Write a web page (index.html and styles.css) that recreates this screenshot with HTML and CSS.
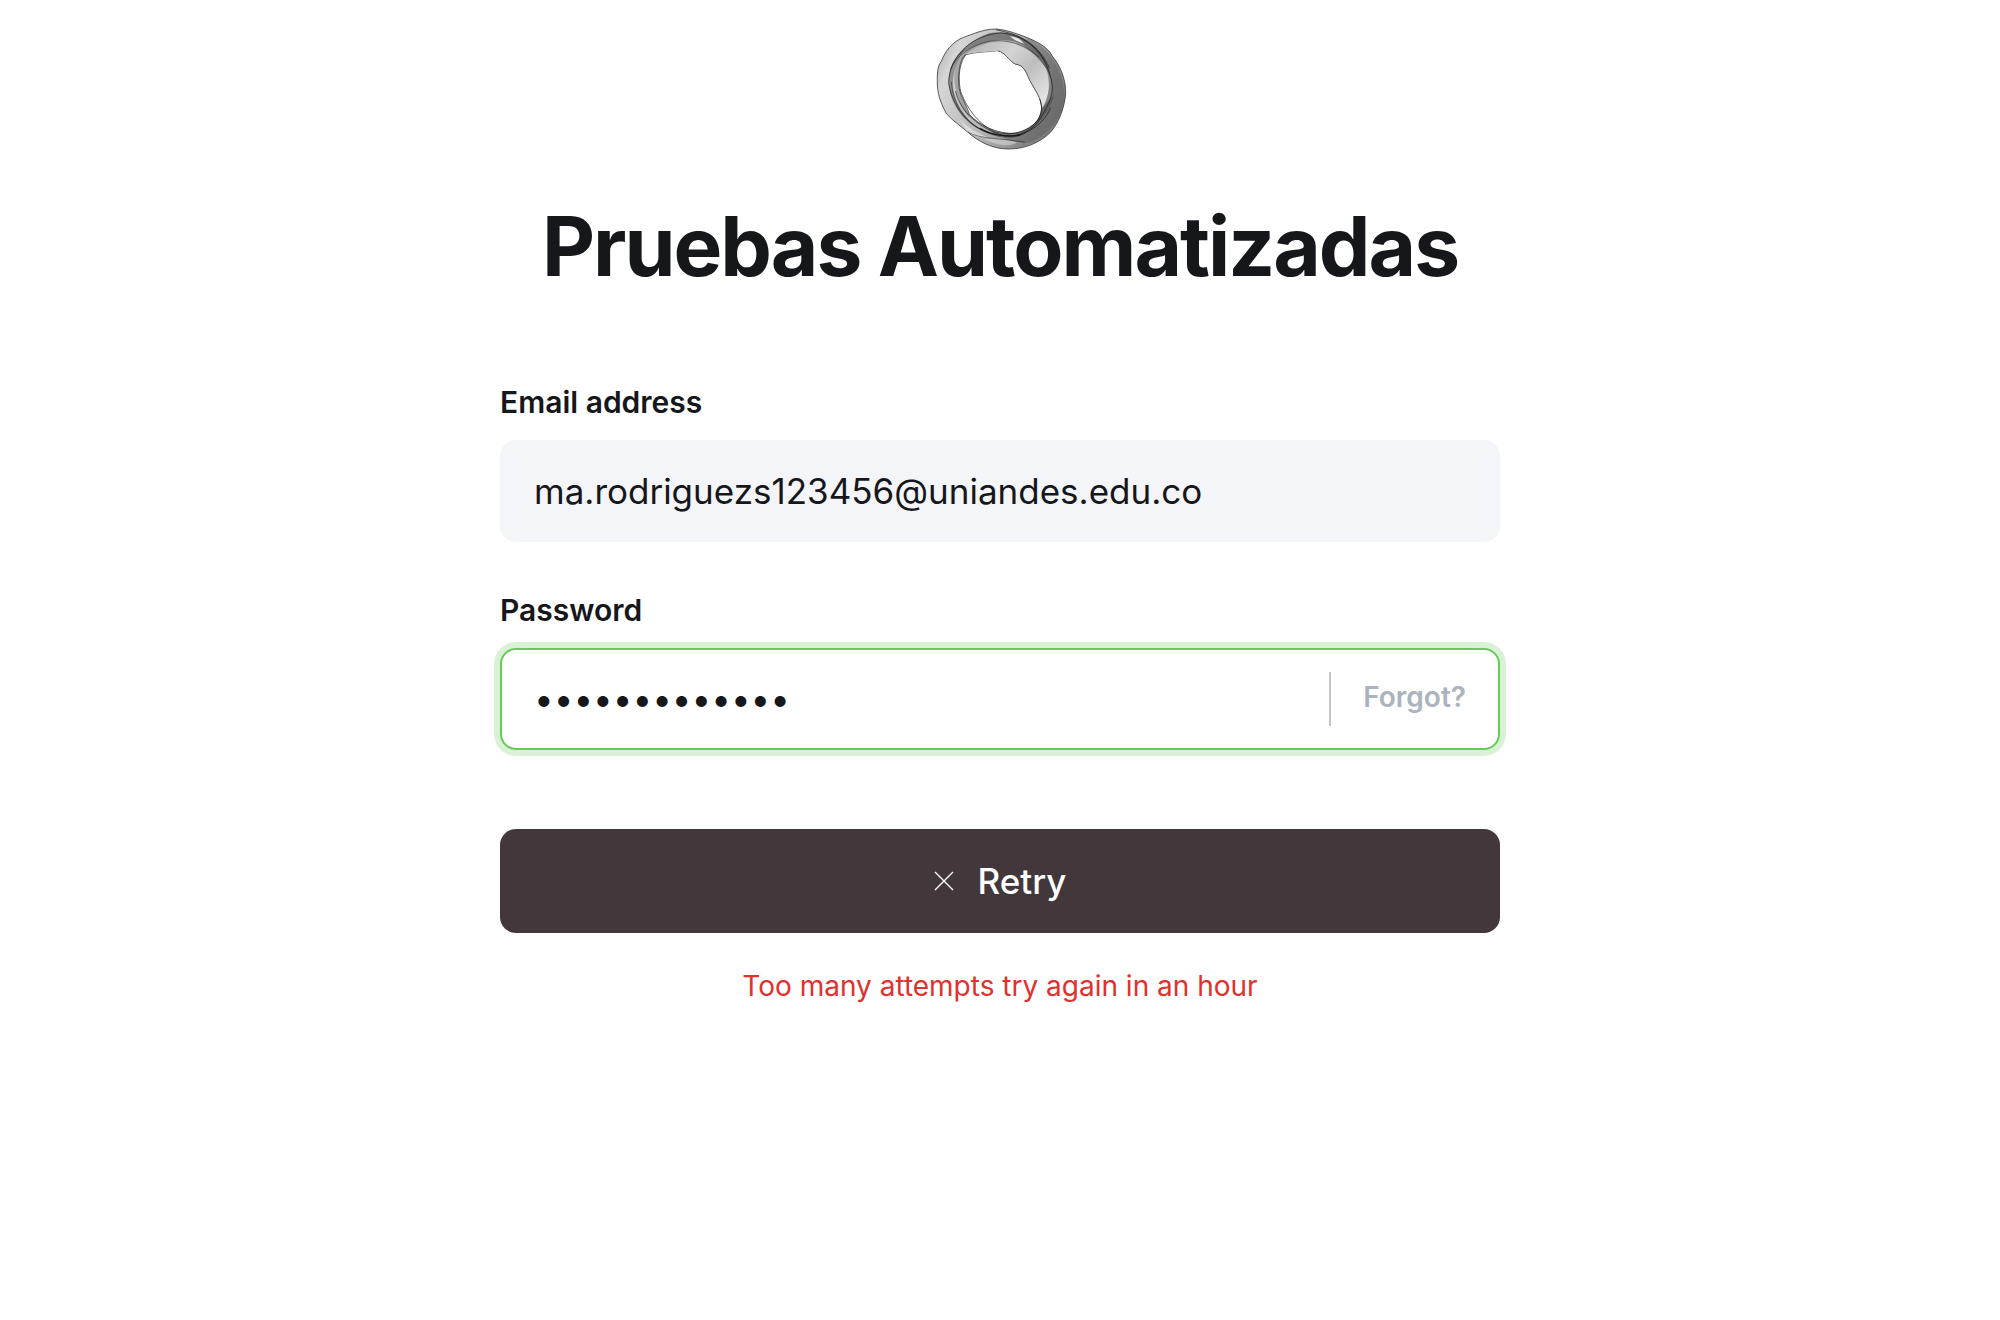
FILE: index.html
```html
<!DOCTYPE html>
<html lang="en">
<head>
<meta charset="utf-8">
<meta name="viewport" content="width=device-width, initial-scale=1">
<title>Sign in - Pruebas Automatizadas</title>
<link rel="stylesheet" href="styles.css">
</head>
<body>
<main class="signin">
  <header class="signin-header">
    <svg class="site-icon" viewBox="0 0 480 450" aria-hidden="true">
      <defs>
        <linearGradient id="band" x1="0" y1="0.2" x2="1" y2="0.6">
          <stop offset="0" stop-color="#b4b4b4"/>
          <stop offset="0.12" stop-color="#d6d6d6"/>
          <stop offset="0.5" stop-color="#b8b8b8"/>
          <stop offset="0.85" stop-color="#858585"/>
          <stop offset="1" stop-color="#7a7a7a"/>
        </linearGradient>
        <linearGradient id="veil" x1="0" y1="0" x2="1" y2="0.8">
          <stop offset="0" stop-color="#b0b0b0"/>
          <stop offset="0.4" stop-color="#d4d4d4"/>
          <stop offset="0.65" stop-color="#bdbdbd"/>
          <stop offset="1" stop-color="#e4e4e4"/>
        </linearGradient>
      </defs>
      <path fill="url(#band)" fill-rule="evenodd" stroke="#3c3c3c" stroke-width="2.5" d="M228 42C190 42 160 57 128 68C96 82 75 109 64 139C50 155 52 184 52 210C54 246 67 274 80 297C98 317 120 332 142 350C172 378 216 402 264 402C314 402 348 386 378 364C411 339 433 284 437 236C438 190 419 150 397 124C384 95 349 79 312 64C284 54 257 44 228 42Z M233 107C259 113 264 137 286 147C310 150 318 169 328 193C343 223 365 247 365 281C362 316 332 347 286 355C236 358 180 334 148 298C135 257 115 239 116 200C114 158 124 127 137 119C169 110 205 111 233 107Z"/>
      <path fill="url(#veil)" d="M137 119C158 92 207 77 260 82C316 89 354 125 378 160C392 198 390 243 365 281C365 247 343 223 328 193C318 169 310 150 286 147C264 137 259 113 233 107C205 111 169 110 137 119Z"/>
      <path fill="#333" fill-opacity="0.5" d="M91 163C103 121 150 74 210 54C261 47 300 60 330 82C360 104 385 140 392 190C378 150 350 120 312 92C276 71 225 70 174 88C127 107 103 133 91 163Z"/>
      <path fill="#333" fill-opacity="0.4" d="M86 204C84 155 105 124 139 98C108 134 95 178 100 224C114 292 160 341 224 357C164 350 119 303 101 263C91 243 87 224 86 204Z"/>
      <path fill="#444" fill-opacity="0.3" d="M116 200C112 160 120 132 137 119C160 96 200 82 240 78C190 72 140 92 116 130C100 160 98 200 112 240C120 270 130 290 150 308C135 257 115 239 116 200Z"/>
      <path fill="#222" fill-opacity="0.3" d="M210 350C236 358 260 358 286 355C332 347 362 316 365 281C382 263 394 248 403 238C390 290 354 338 301 360C270 368 237 364 210 350Z"/>
      <path fill="#444" fill-opacity="0.28" d="M312 64C384 95 425 150 434 240C428 306 390 357 328 383C300 384 270 378 250 370C300 368 350 335 380 280C408 238 405 157 312 64Z"/>
      <path fill="#e6e6e6" d="M270 63C291 66 303 73 312 86C297 82 282 75 270 63Z"/>
      <path fill="#e0e0e0" fill-opacity="0.75" d="M118 312C142 338 178 357 208 369C180 369 158 363 140 348Z"/>
      <path fill="#dcdcdc" fill-opacity="0.55" d="M190 372C225 368 255 372 290 382C280 394 240 396 190 372Z"/>
      <g fill="none" stroke="#151515" stroke-width="2.5" stroke-opacity="0.8">
        <path d="M86 204C89 116 163 58 244 54C306 60 357 98 380 152C404 209 403 238 373 288C350 343 299 372 238 361C166 350 101 296 86 204Z"/>
        <path d="M137 119C112 155 116 202 122 230C143 285 177 327 221 349C269 367 326 350 356 313C368 289 366 270 359 252"/>
        <path stroke-opacity="0.6" d="M91 163C111 119 156 91 207 79C267 70 322 93 357 127"/>
        <path d="M107 228C120 292 180 340 252 363C303 368 365 340 392 278"/>
        <path stroke-opacity="0.6" d="M94 200C98 268 139 329 204 354C244 370 284 372 316 354"/>
        <path d="M228 44C262 52 290 58 320 78C350 100 376 126 388 160"/>
        <path stroke-opacity="0.5" d="M233 107C259 113 264 137 286 147C310 150 318 169 328 193C343 223 365 247 365 281"/>
        <path stroke-opacity="0.6" d="M142 350C179 374 240 368 315 382"/>
        <path stroke-opacity="0.9" stroke-width="4" d="M180 340C215 362 265 366 300 360"/>
      </g>
    </svg>
    <h1 class="site-title">Pruebas Automatizadas</h1>
  </header>
  <form class="signin-form">
    <div class="field">
      <label class="field-label" for="email">Email address</label>
      <div class="field-box">
        <input class="field-input" id="email" type="email" value="ma.rodriguezs123456@uniandes.edu.co">
      </div>
    </div>
    <div class="field">
      <label class="field-label" for="password">Password</label>
      <div class="field-box field-box-active">
        <input class="field-input" id="password" type="password" value="automatizadas">
        <button class="forgot" type="button">Forgot?</button>
      </div>
    </div>
    <button class="submit" type="submit">
      <svg class="submit-icon" viewBox="0 0 20 20" aria-hidden="true"><path d="M1 1L19 19M19 1L1 19"/></svg>
      Retry
    </button>
  </form>
  <p class="error" role="alert">Too many attempts try again in an hour</p>
</main>
</body>
</html>
```

FILE: styles.css
```css
* {
  box-sizing: border-box;
}

body {
  margin: 0;
  background: #fff;
  color: #15171a;
  font-family: Inter, "Liberation Sans", sans-serif;
}

.signin {
  width: 100%;
  max-width: 1048px;
  margin: 0 auto;
  padding: 15px 24px;
}

.signin-header {
  display: flex;
  flex-direction: column;
  align-items: center;
  text-align: center;
}

.site-icon {
  width: 160px;
  height: 150px;
}

.site-title {
  margin: 34px 0 89px;
  font-size: 82px;
  line-height: 96px;
  font-weight: 700;
  letter-spacing: -2px;
}

.signin-form {
  display: flex;
  flex-direction: column;
}

.field {
  display: flex;
  flex-direction: column;
  gap: 20px;
  margin-bottom: 50px;
}

.field-label {
  font-size: 30px;
  line-height: 36px;
  font-weight: 600;
}

.field-box {
  display: flex;
  align-items: center;
  height: 102px;
  padding: 0 32px;
  border: 2px solid #f4f5f8;
  border-radius: 16px;
  background: #f4f5f8;
}

.field-box-active {
  border-color: #65cb55;
  background: #fff;
  box-shadow: 0 0 0 6px #d9f2d6;
}

.field-input {
  flex: 1;
  min-width: 0;
  padding: 0;
  border: 0;
  outline: 0;
  background: transparent;
  color: inherit;
  font-family: inherit;
  font-size: 35px;
  line-height: 48px;
}

.forgot {
  height: 54px;
  padding: 0 0 4px 32px;
  border: 0;
  border-left: 2px solid #c5c5c5;
  background: transparent;
  color: #abb4be;
  font-family: inherit;
  font-size: 28px;
  font-weight: 600;
}

.submit {
  display: flex;
  align-items: center;
  justify-content: center;
  gap: 24px;
  height: 104px;
  margin-top: 29px;
  border: 0;
  border-radius: 16px;
  background: #42373a;
  color: #fff;
  font-family: inherit;
  font-size: 35px;
  font-weight: 500;
}

.submit-icon {
  width: 20px;
  height: 20px;
  fill: none;
  stroke: #fff;
  stroke-width: 1.4;
}

.error {
  margin: 35px 0 0;
  color: #e1302d;
  font-size: 28px;
  line-height: 36px;
  text-align: center;
}
```
